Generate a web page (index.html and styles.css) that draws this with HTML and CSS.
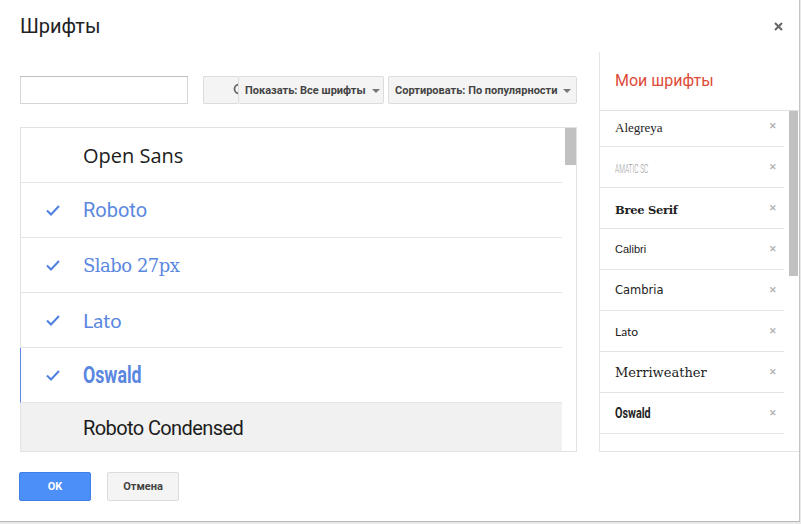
FILE: index.html
```html
<!DOCTYPE html>
<html>
<head>
  <meta name="viewport" content="width=device-width, initial-scale=1.0">
  <link rel="stylesheet" href="styles.css">
</head>
<body>
<div class="dialog">

  <div class="dialog_head">
    <h1>Шрифты</h1>
    <svg class="close_btn" width="9" height="9" viewBox="0 0 9 9"><path d="M1 1L8 8M8 1L1 8" stroke="#666" stroke-width="2"/></svg>
  </div>

  <div class="dialog_body">

    <div class="left_col">
      <div class="toolbar">
        <input class="search_box" type="text">
        <div class="search_btn">
          <svg width="14" height="14" viewBox="0 0 14 14"><circle cx="6" cy="6" r="4.5" fill="none" stroke="#666" stroke-width="1.8"/><path d="M9.5 9.5L13 13" stroke="#666" stroke-width="2"/></svg>
        </div>
        <div class="drop_btn show_btn">Показать: Все шрифты <span class="caret"></span></div>
        <div class="drop_btn sort_btn">Сортировать: По популярности <span class="caret"></span></div>
      </div>

      <div class="font_list">
        <div class="rows">
          <div class="font_row">
            <span class="check"></span>
            <span class="f_opensans">Open Sans</span>
          </div>
          <div class="font_row picked">
            <span class="check"><svg width="14" height="11" viewBox="0 0 14 11"><path d="M1 5.5L5 9.5L13 1" fill="none" stroke="#4f80e0" stroke-width="2"/></svg></span>
            <span class="f_roboto">Roboto</span>
          </div>
          <div class="font_row picked">
            <span class="check"><svg width="14" height="11" viewBox="0 0 14 11"><path d="M1 5.5L5 9.5L13 1" fill="none" stroke="#4f80e0" stroke-width="2"/></svg></span>
            <span class="f_slabo">Slabo 27px</span>
          </div>
          <div class="font_row picked">
            <span class="check"><svg width="14" height="11" viewBox="0 0 14 11"><path d="M1 5.5L5 9.5L13 1" fill="none" stroke="#4f80e0" stroke-width="2"/></svg></span>
            <span class="f_lato">Lato</span>
          </div>
          <div class="font_row picked active">
            <span class="check"><svg width="14" height="11" viewBox="0 0 14 11"><path d="M1 5.5L5 9.5L13 1" fill="none" stroke="#4f80e0" stroke-width="2"/></svg></span>
            <span class="f_oswald">Oswald</span>
          </div>
          <div class="font_row hover">
            <span class="check"></span>
            <span class="f_condensed">Roboto Condensed</span>
          </div>
        </div>
        <div class="scroll_track">
          <div class="scroll_thumb"></div>
        </div>
      </div>
    </div>

    <div class="my_fonts">
      <div class="my_head">Мои шрифты</div>
      <div class="my_wrap">
        <div class="my_list">
          <div class="my_item"><span class="m_alegreya">Alegreya</span><span class="rm">&#10005;</span></div>
          <div class="my_item"><span class="m_amatic">Amatic SC</span><span class="rm">&#10005;</span></div>
          <div class="my_item"><span class="m_bree">Bree Serif</span><span class="rm">&#10005;</span></div>
          <div class="my_item"><span class="m_calibri">Calibri</span><span class="rm">&#10005;</span></div>
          <div class="my_item"><span class="m_cambria">Cambria</span><span class="rm">&#10005;</span></div>
          <div class="my_item"><span class="m_lato">Lato</span><span class="rm">&#10005;</span></div>
          <div class="my_item"><span class="m_merri">Merriweather</span><span class="rm">&#10005;</span></div>
          <div class="my_item"><span class="m_oswald">Oswald</span><span class="rm">&#10005;</span></div>
          <div class="my_item"></div>
        </div>
        <div class="my_track">
          <div class="my_thumb"></div>
        </div>
      </div>
    </div>

  </div>

  <div class="dialog_foot">
    <div class="btn btn_ok">OK</div>
    <div class="btn btn_cancel">Отмена</div>
  </div>

</div>
</body>
</html>
```

FILE: styles.css
```css
html, body {
  margin: 0;
  height: 100%;
}

body {
  background: #e9e9e9;
  font-family: Roboto, "Liberation Sans", Arial, sans-serif;
}

.dialog {
  box-sizing: border-box;
  width: 800px;
  height: 522px;
  background: #fff;
  border-right: 1px solid #c4c4c4;
  border-bottom: 1px solid #b8b8b8;
  display: flex;
  flex-direction: column;
}

.dialog_head {
  height: 52px;
  display: flex;
  align-items: center;
  justify-content: space-between;
  padding: 0 16px 0 20px;
}

.dialog_head h1 {
  margin: 0;
  font-size: 20px;
  font-weight: normal;
  color: #222;
}

.close_btn {
  margin-top: 1px;
}

.dialog_body {
  display: flex;
  padding-left: 20px;
  gap: 22px;
}

.left_col {
  width: 557px;
  padding-top: 24px;
}

.toolbar {
  display: flex;
  height: 28px;
}

.search_box {
  box-sizing: border-box;
  width: 168px;
  height: 28px;
  margin: 0;
  border: 1px solid #d6d6d6;
  border-top-color: #c0c0c0;
  outline: none;
}

.search_btn {
  box-sizing: border-box;
  width: 35px;
  height: 28px;
  margin-left: 15px;
  background: #f4f4f4;
  border: 1px solid #dcdcdc;
  border-right: none;
  border-radius: 2px 0 0 2px;
  display: flex;
  align-items: center;
  justify-content: flex-end;
  overflow: hidden;
}

.search_btn svg {
  flex-shrink: 0;
  margin-right: -9px;
}

.drop_btn {
  box-sizing: border-box;
  height: 28px;
  background: #f4f4f4;
  border: 1px solid #dcdcdc;
  border-radius: 2px;
  display: flex;
  align-items: center;
  padding-left: 6px;
  font-size: 11px;
  font-weight: bold;
  color: #444;
  white-space: nowrap;
}

.show_btn {
  width: 146px;
}

.sort_btn {
  width: 189px;
  margin-left: 4px;
}

.caret {
  display: inline-block;
  margin-left: 6px;
  margin-top: 1px;
  border-left: 4px solid transparent;
  border-right: 4px solid transparent;
  border-top: 4px solid #777;
}

.font_list {
  box-sizing: border-box;
  margin-top: 23px;
  height: 325px;
  border: 1px solid #e2e2e2;
  border-left: none;
  display: flex;
}

.rows {
  flex: 1;
  overflow: hidden;
}

.font_row {
  box-sizing: border-box;
  height: 55px;
  border-left: 1px solid #e2e2e2;
  border-bottom: 1px solid #e4e4e4;
  display: flex;
  align-items: center;
  font-size: 20px;
  color: #1c1c1c;
}

.font_row.picked {
  color: #5b87e0;
}

.font_row.active {
  border-left-color: #5b87e0;
}

.font_row.hover {
  background: #f1f1f1;
  height: 60px;
  padding-bottom: 10px;
}

.check {
  width: 62px;
  padding-left: 25px;
  box-sizing: border-box;
  display: flex;
  align-items: center;
}

.f_opensans {
  font-family: "Open Sans", sans-serif;
}

.f_roboto {
  font-family: Roboto, sans-serif;
}

.f_slabo {
  font-family: "DejaVu Serif", serif;
  font-size: 18px;
  letter-spacing: -0.5px;
}

.f_lato {
  font-family: Lato, sans-serif;
}

.f_oswald {
  display: inline-block;
  font-family: Roboto, sans-serif;
  font-weight: bold;
  font-size: 24px;
  transform: scaleX(0.74);
  transform-origin: left center;
}

.f_condensed {
  font-family: Roboto, sans-serif;
  letter-spacing: -0.6px;
}

.scroll_track {
  width: 14px;
  padding: 0 0 0 3px;
  box-sizing: border-box;
}

.scroll_thumb {
  height: 37px;
  background: #c1c1c1;
}

.my_fonts {
  box-sizing: border-box;
  width: 201px;
  height: 400px;
  border-left: 1px solid #e6e6e6;
  border-bottom: 1px solid #e4e4e4;
  display: flex;
  flex-direction: column;
}

.my_head {
  box-sizing: border-box;
  height: 59px;
  padding: 19px 0 0 15px;
  border-bottom: 1px solid #e2e2e2;
  font-size: 16px;
  color: #dd4b39;
}

.my_wrap {
  flex: 1;
  display: flex;
  overflow: hidden;
}

.my_list {
  flex: 1;
  margin-top: -5px;
}

.my_item {
  box-sizing: border-box;
  height: 41px;
  border-bottom: 1px solid #e4e4e4;
  margin-right: 4px;
  display: flex;
  align-items: center;
  justify-content: space-between;
  padding: 0 7px 0 15px;
  font-size: 12px;
  color: #222;
}

.rm {
  font-size: 9px;
  font-weight: bold;
  color: #b4b4b4;
}

.m_alegreya {
  font-family: "Liberation Serif", serif;
  font-size: 13px;
  margin-top: 3px;
}

.m_amatic {
  display: inline-block;
  font-family: Roboto, sans-serif;
  text-transform: uppercase;
  font-size: 12px;
  font-weight: 300;
  color: #9a9a9a;
  margin-top: 3px;
  transform: scaleX(0.55);
  transform-origin: left center;
}

.m_bree {
  font-family: "DejaVu Serif", serif;
  font-weight: bold;
  font-size: 11.5px;
  letter-spacing: -0.3px;
  margin-top: 3px;
}

.m_calibri {
  font-family: "Liberation Sans", sans-serif;
  font-size: 11px;
}

.m_cambria {
  font-family: "DejaVu Sans", sans-serif;
  font-size: 11.5px;
}

.m_lato {
  font-family: Lato, sans-serif;
  font-size: 12px;
}

.m_merri {
  font-family: "DejaVu Serif", serif;
  font-size: 13px;
}

.m_oswald {
  display: inline-block;
  font-family: Roboto, sans-serif;
  font-weight: bold;
  font-size: 15px;
  transform: scaleX(0.72);
  transform-origin: left center;
}

.my_track {
  width: 11px;
  padding: 0 1px;
  box-sizing: border-box;
}

.my_thumb {
  height: 165px;
  background: #c1c1c1;
}

.dialog_foot {
  display: flex;
  gap: 16px;
  padding: 20px 0 0 19px;
}

.btn {
  box-sizing: border-box;
  width: 72px;
  height: 29px;
  border-radius: 2px;
  display: flex;
  align-items: center;
  justify-content: center;
  font-size: 11px;
  font-weight: bold;
}

.btn_ok {
  background: #4d8ff8;
  border: 1px solid #3f7fe8;
  color: #fff;
}

.btn_cancel {
  background: #f4f4f4;
  border: 1px solid #dcdcdc;
  color: #444;
}
```
